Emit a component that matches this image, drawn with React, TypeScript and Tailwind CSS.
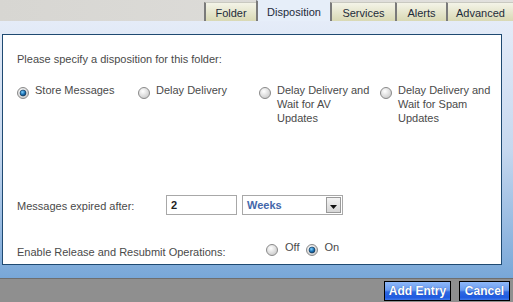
import React from "react";

function Radio({ checked }: { checked?: boolean }) {
  return (
    <svg width="12" height="12" viewBox="0 0 12 12" className="shrink-0">
      <defs>
        <radialGradient id={checked ? "rg1" : "rg0"} cx="40%" cy="35%" r="70%">
          <stop offset="0%" stopColor="#ffffff" />
          <stop offset="100%" stopColor="#c8c8c8" />
        </radialGradient>
        <radialGradient id="dot" cx="40%" cy="35%" r="70%">
          <stop offset="0%" stopColor="#7fd0ff" />
          <stop offset="60%" stopColor="#1a6fb0" />
          <stop offset="100%" stopColor="#0b3a66" />
        </radialGradient>
      </defs>
      <circle cx="6" cy="6" r="5.5" fill={`url(#${checked ? "rg1" : "rg0"})`} stroke="#8a8a8a" strokeWidth="1" />
      {checked && <circle cx="6" cy="6" r="3" fill="url(#dot)" stroke="#0d3354" strokeWidth="0.6" />}
    </svg>
  );
}

const tabs = ["Folder", "Disposition", "Services", "Alerts", "Advanced"];
const tabWidths = ["w-[52px]", "w-[74px]", "w-[65px]", "w-[51px]", "w-[67px]"];

export default function App() {
  return (
    <div
      className="w-[513px] h-[302px] flex flex-col overflow-hidden text-[11px] text-[#4a4a4a]"
      style={{ fontFamily: '"Liberation Sans", Arial, sans-serif' }}
    >
      {/* Top bar with tabs */}
      <div className="h-[21px] flex justify-end items-end bg-gradient-to-r from-[#d7d6d2] to-[#e2e1de]">
        {tabs.map((t, i) => {
          const active = t === "Disposition";
          return (
            <div
              key={t}
              className={`${tabWidths[i]} h-[19px] flex items-center justify-center pt-[2px] border-l-2 border-t border-l-[#7a7a7a] border-t-[#c9c9c0] text-[#1e2b3a] ${
                active
                  ? "bg-[#e6eef9] h-[21px] border-t-[#e6eef9]"
                  : "bg-gradient-to-b from-[#f4f4e8] to-[#d9d9b4]"
              }`}
            >
              {t}
            </div>
          );
        })}
      </div>

      {/* Main panel */}
      <div className="flex-1 bg-gradient-to-b from-[#e5ecf8] via-[#c6d8ef] to-[#78a7d8] pt-[13px] pl-[2px] pr-[11px] pb-[13px]">
        <div className="h-full bg-white border border-[#1f4a72] pl-[14px] pt-[17px]">
          <div className="leading-[14px]">Please specify a disposition for this folder:</div>

          <div className="flex mt-[17px] leading-[14px]">
            {[
              { label: ["Store Messages"], checked: true },
              { label: ["Delay Delivery"] },
              { label: ["Delay Delivery and", "Wait for AV", "Updates"] },
              { label: ["Delay Delivery and", "Wait for Spam", "Updates"] },
            ].map((o, i) => (
              <div key={i} className="w-[121px] flex items-start gap-[6px]">
                <div className="mt-[4px]">
                  <Radio checked={o.checked} />
                </div>
                <div>
                  {o.label.map((l) => (
                    <div key={l}>{l}</div>
                  ))}
                </div>
              </div>
            ))}
          </div>

          <div className="flex items-center mt-[70px]">
            <div className="w-[149px] mt-[2px]">Messages expired after:</div>
            <div className="w-[71px] h-[20px] border border-[#a8a8a8] flex items-center pl-[4px] font-bold text-[11px] text-[#222]">
              2
            </div>
            <div className="ml-[5px] w-[101px] h-[20px] border border-[#a8a8a8] flex items-center justify-between pl-[4px] pr-[1px]">
              <span className="font-bold text-[11px] text-[#4467aa]">Weeks</span>
              <div className="w-[15px] h-[16px] bg-gradient-to-b from-[#f4f4f4] to-[#d6d6d6] border border-[#9a9a9a] flex items-center justify-center">
                <svg width="7" height="4" viewBox="0 0 7 4" className="mt-[3px]">
                  <polygon points="0,0 7,0 3.5,4" fill="#111" />
                </svg>
              </div>
            </div>
          </div>

          <div className="flex items-center mt-[24px]">
            <div className="w-[249px] mt-[3px]">Enable Release and Resubmit Operations:</div>
            <Radio />
            <span className="ml-[7px] mb-[6px]">Off</span>
            <span className="ml-[7px]">
              <Radio checked />
            </span>
            <span className="ml-[6px] mb-[6px]">On</span>
          </div>
        </div>
      </div>

      {/* Footer */}
      <div className="h-[24px] bg-[#8f8f8f] border-t border-[#6e6e6e] flex justify-end items-center gap-[8px] pr-[3px]">
        {["Add Entry", "Cancel"].map((b) => (
          <div
            key={b}
            className={`${b === "Add Entry" ? "w-[67px]" : "w-[51px]"} h-[20px] border border-black flex items-center justify-center text-white font-bold text-[12px] bg-[linear-gradient(to_bottom,#8fb8f8_0%,#6a9cf0_45%,#2f68e2_55%,#1f5be0_85%,#3f78ea_100%)]`}
            style={{ textShadow: "0 0 1px #1a3f9a" }}
          >
            {b}
          </div>
        ))}
      </div>
    </div>
  );
}
